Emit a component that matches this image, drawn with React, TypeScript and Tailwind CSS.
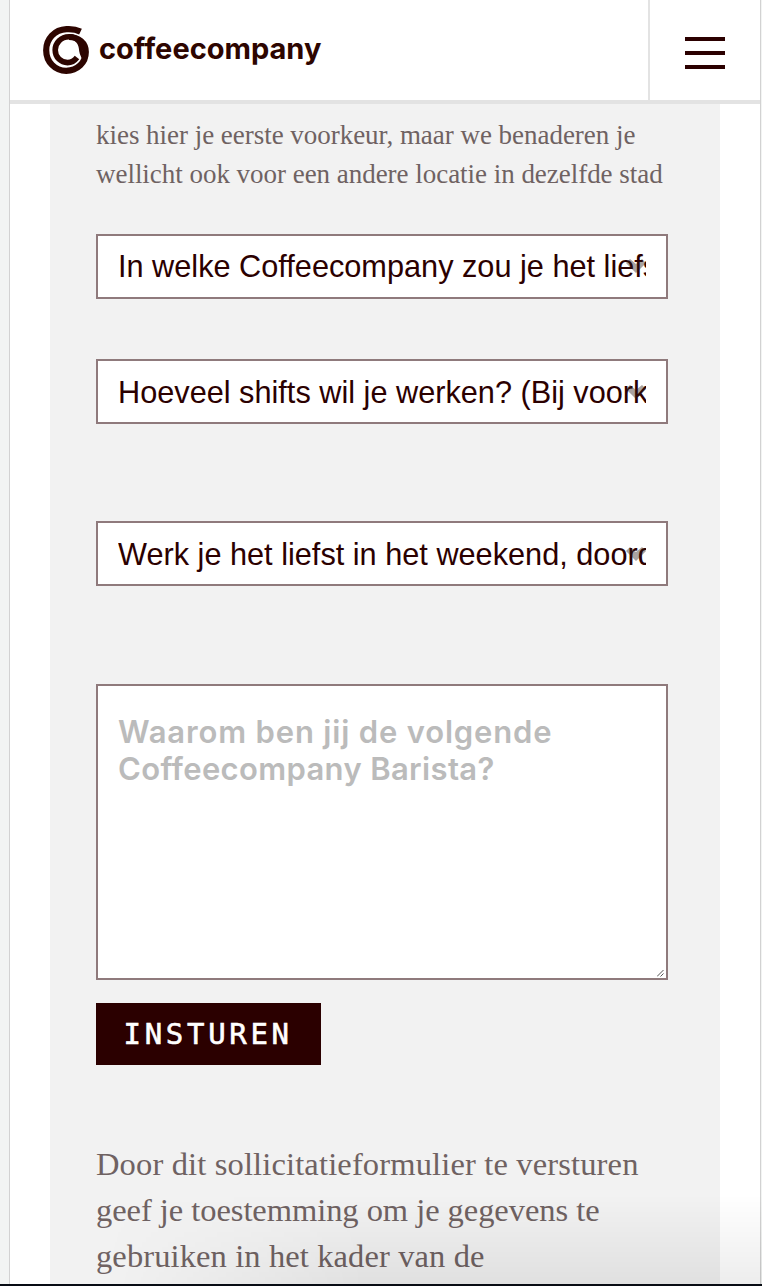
import React from "react";

function Logo() {
  return (
    <a href="#" className="flex items-center" aria-label="coffeecompany">
      <svg width="46" height="48" viewBox="0 0 46 48" fill="none" stroke="#2d0500">
        <path
          strokeWidth="6.2"
          d="M37.500 5.600C33 3.400 28 2.900 23.500 3.200C11.500 3.800 3.200 13 3.200 24.200C3.200 36 12 44.800 23.200 44.800C34.500 44.800 42.800 36.500 42.800 26C42.800 17 35.500 11 26 11"
        />
        <path
          strokeWidth="5.6"
          d="M42 33C41.200 30 39.500 29 39 25C38.500 17 34 10.800 26 10.800C18 10.800 12.200 17 12.200 24C12.200 31.500 18 36.600 24.500 36.600C28.500 36.600 31.500 34.800 34 31.500"
        />
      </svg>
      <span className="ml-[10px] -mt-[3px] whitespace-nowrap font-['Inter'] text-[29px] leading-[34px] font-bold tracking-[0px] text-[#2d0500] [font-variant-ligatures:none]">
        coffeecompany
      </span>
    </a>
  );
}

function SelectField({ label, className }: { label: string; className: string }) {
  return (
    <button
      type="button"
      className={`flex h-[65px] w-[572px] items-center border-2 border-[#8f7a7c] bg-white px-5 text-left ${className}`}
    >
      <span className="relative block w-full overflow-hidden whitespace-nowrap font-['Liberation_Sans',sans-serif] text-[30.700px] leading-[41px] text-[#2b0000]">
        {label}
        <svg className="absolute top-[12px] right-0 opacity-40" width="20" height="16" viewBox="0 0 20 16">
          <path d="M0 5L4 1L10 6L16 1L20 5L10 15Z" fill="#2d1b16" />
        </svg>
      </span>
    </button>
  );
}

export default function App() {
  return (
    <div className="relative flex h-[1286px] w-[762px] flex-col overflow-hidden bg-[#f2f4f3]">
      <div className="ml-[9px] flex h-[1284px] w-[752px] shrink-0 flex-col overflow-hidden border-x border-[#d2d2d2] bg-white">
        <header className="flex h-[104px] shrink-0 border-b-4 border-[#e3e3e3]">
          <div className="flex flex-1 items-center pl-[33px]">
            <Logo />
          </div>
          <button
            type="button"
            aria-label="Menu"
            className="flex w-[112px] flex-col items-start gap-[10px] border-l-2 border-[#e3e3e3] pt-[37px] pl-[35px]"
          >
            <span className="h-1 w-10 bg-[#2b0000]" />
            <span className="h-1 w-10 bg-[#2b0000]" />
            <span className="h-1 w-10 bg-[#2b0000]" />
          </button>
        </header>

        <main className="ml-10 flex w-[670px] flex-1 flex-col items-start bg-[#f2f2f2] pt-[12px] pl-[46px]">
          <p className="whitespace-nowrap font-['Liberation_Serif',serif] text-[27px] leading-[39px] text-[#6f6262]">
            <span className="block tracking-[-0.03px]">kies hier je eerste voorkeur, maar we benaderen je</span>
            <span className="block tracking-[-0.03px]">wellicht ook voor een andere locatie in dezelfde stad</span>
          </p>

          <SelectField className="mt-10" label="In welke Coffeecompany zou je het liefst werken?" />
          <SelectField className="mt-[60px] pt-px" label="Hoeveel shifts wil je werken? (Bij voorkeur)" />
          <SelectField className="mt-[97px] pt-px" label="Werk je het liefst in het weekend, doordeweeks" />

          <div className="relative mt-[98px] h-[296px] w-[572px] shrink-0 border-2 border-[#8f7a7c] bg-white px-5 pt-[27px]">
            <p className="whitespace-nowrap font-['Inter'] text-[31px] leading-[37px] font-semibold text-[#bbbbbb]">
              <span className="block tracking-[0.830px]">Waarom ben jij de volgende</span>
              <span className="block tracking-[0.350px]">Coffeecompany Barista?</span>
            </p>
            <svg className="absolute right-[2px] bottom-[1px]" width="7" height="7" viewBox="0 0 7 7" stroke="#555">
              <path d="M0 6.500L6.500 0M3.500 6.500L6.500 3.500" />
            </svg>
          </div>

          <button
            type="button"
            className="mt-[23px] flex h-[62px] w-[225px] shrink-0 items-center bg-[#2b0000] pt-[2px] pl-[27.500px] font-['DejaVu_Sans_Mono',monospace] text-[29px] tracking-[3.700px] text-white [-webkit-text-stroke:0.6px_white]"
          >
            INSTUREN
          </button>

          <p className="mt-[76px] whitespace-nowrap font-['Liberation_Serif',serif] text-[32.500px] leading-[46px] text-[#6f6262]">
            <span className="block tracking-[0.150px]">Door dit sollicitatieformulier te versturen</span>
            <span className="block tracking-[-0.050px]">geef je toestemming om je gegevens te</span>
            <span className="block tracking-[0.110px]">gebruiken in het kader van de</span>
          </p>
        </main>
      </div>
      <div className="h-[2px] shrink-0 bg-[#080c14]" />
      <div className="pointer-events-none absolute right-0 bottom-[2px] h-[90px] w-[660px] bg-linear-to-b from-transparent to-black/7 mask-l-from-60% mask-l-to-100%" />
    </div>
  );
}
